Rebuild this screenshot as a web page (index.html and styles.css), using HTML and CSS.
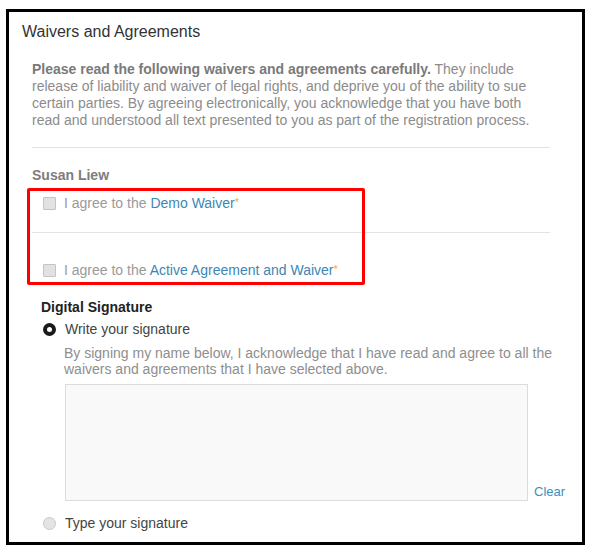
FILE: index.html
```html
<!DOCTYPE html>
<html lang="en">
<head>
  <meta charset="UTF-8" />
  <title>Waivers and Agreements</title>
  <link rel="stylesheet" href="styles.css">
</head>
<body>
  <div class="frame">
    <div class="highlight"></div>
    <h2 class="title">Waivers and Agreements</h2>

    <div class="section">
      <p class="intro"><strong>Please read the following waivers and agreements carefully.</strong> They include release of liability and waiver of legal rights, and deprive you of the ability to sue certain parties. By agreeing electronically, you acknowledge that you have both read and understood all text presented to you as part of the registration process.</p>
      <div class="rule"></div>

      <div class="participant">Susan Liew</div>

      <label class="agree first">
        <span class="checkbox"></span>
        <span>I agree to the <a href="#">Demo Waiver</a><span class="req">*</span></span>
      </label>
      <div class="rule sep"></div>
      <label class="agree second">
        <span class="checkbox"></span>
        <span>I agree to the <a href="#">Active Agreement and Waiver</a><span class="req">*</span></span>
      </label>

      <div class="signature">
        <div class="sig-title">Digital Signature</div>
        <div class="option">
          <span class="radio checked"></span>
          <span>Write your signature</span>
        </div>
        <p class="sig-note">By signing my name below, I acknowledge that I have read and agree to all the waivers and agreements that I have selected above.</p>
        <div class="pad-row">
          <div class="pad"></div>
          <a href="#" class="clear">Clear</a>
        </div>
        <div class="option last">
          <span class="radio"></span>
          <span>Type your signature</span>
        </div>
      </div>
    </div>
  </div>
</body>
</html>
```

FILE: styles.css
```css
body {
  margin: 0;
  background: #fff;
  font-family: 'Liberation Sans', Arial, sans-serif;
  font-size: 14px;
  line-height: 17px;
}

.frame {
  position: relative;
  box-sizing: border-box;
  width: 579px;
  height: 536px;
  margin: 9px 0 0 6px;
  border: 3px solid #000;
  padding: 11px 0 0 13px;
}

.highlight {
  position: absolute;
  left: 18px;
  top: 176px;
  width: 338px;
  height: 97px;
  box-sizing: border-box;
  border: 3px solid #ff0000;
  border-radius: 2px;
}

.title {
  margin: 0;
  font-size: 16px;
  font-weight: normal;
  line-height: 17px;
  color: #333;
}

.section {
  margin: 0 32px 0 10px;
}

.intro {
  margin: 21px 0 0;
  padding-right: 4px;
  color: #8c8c8c;
}

.intro strong {
  color: #7a7a7a;
}

.rule {
  height: 1px;
  background: #e3e3e3;
  margin-top: 18px;
}

.participant {
  margin-top: 19px;
  font-weight: bold;
  color: #7d7d7d;
}

.agree {
  display: flex;
  align-items: center;
  gap: 8px;
  padding-left: 11px;
  color: #9a9a9a;
}

.agree.first {
  margin-top: 10px;
}

.rule.sep {
  margin-top: 20px;
}

.agree.second {
  margin-top: 28px;
}

.agree a {
  color: #3d87b5;
  text-decoration: none;
}

.req {
  color: #f0a860;
  font-size: 11px;
  vertical-align: 2px;
}

.checkbox {
  width: 11px;
  height: 11px;
  border: 1px solid #c4c4c4;
  background: #e2e2e2;
  border-radius: 1px;
}

.signature {
  margin-top: 20px;
  padding-left: 9px;
}

.sig-title {
  font-weight: bold;
  color: #222;
}

.option {
  display: flex;
  align-items: center;
  gap: 9px;
  margin-top: 5px;
  padding-left: 2px;
  color: #444;
}

.option.last {
  margin-top: 14px;
}

.radio {
  box-sizing: border-box;
  width: 13px;
  height: 13px;
  border-radius: 50%;
  border: 1px solid #c8c8c8;
  background: #e4e4e4;
}

.radio.checked {
  border: 4px solid #1a1a1a;
  background: #fff;
}

.sig-note {
  margin: 7px -8px 0 23px;
  line-height: 16px;
  color: #8e8e8e;
}

.pad-row {
  display: flex;
  align-items: flex-end;
  gap: 6px;
  margin: 7px -20px 0 24px;
}

.pad {
  flex-shrink: 0;
  box-sizing: border-box;
  width: 463px;
  height: 117px;
  background: #f9f9f9;
  border: 1px solid #dcdcdc;
}

.clear {
  color: #3d8fbf;
  text-decoration: none;
  font-size: 13px;
  margin-bottom: 1px;
}
```
